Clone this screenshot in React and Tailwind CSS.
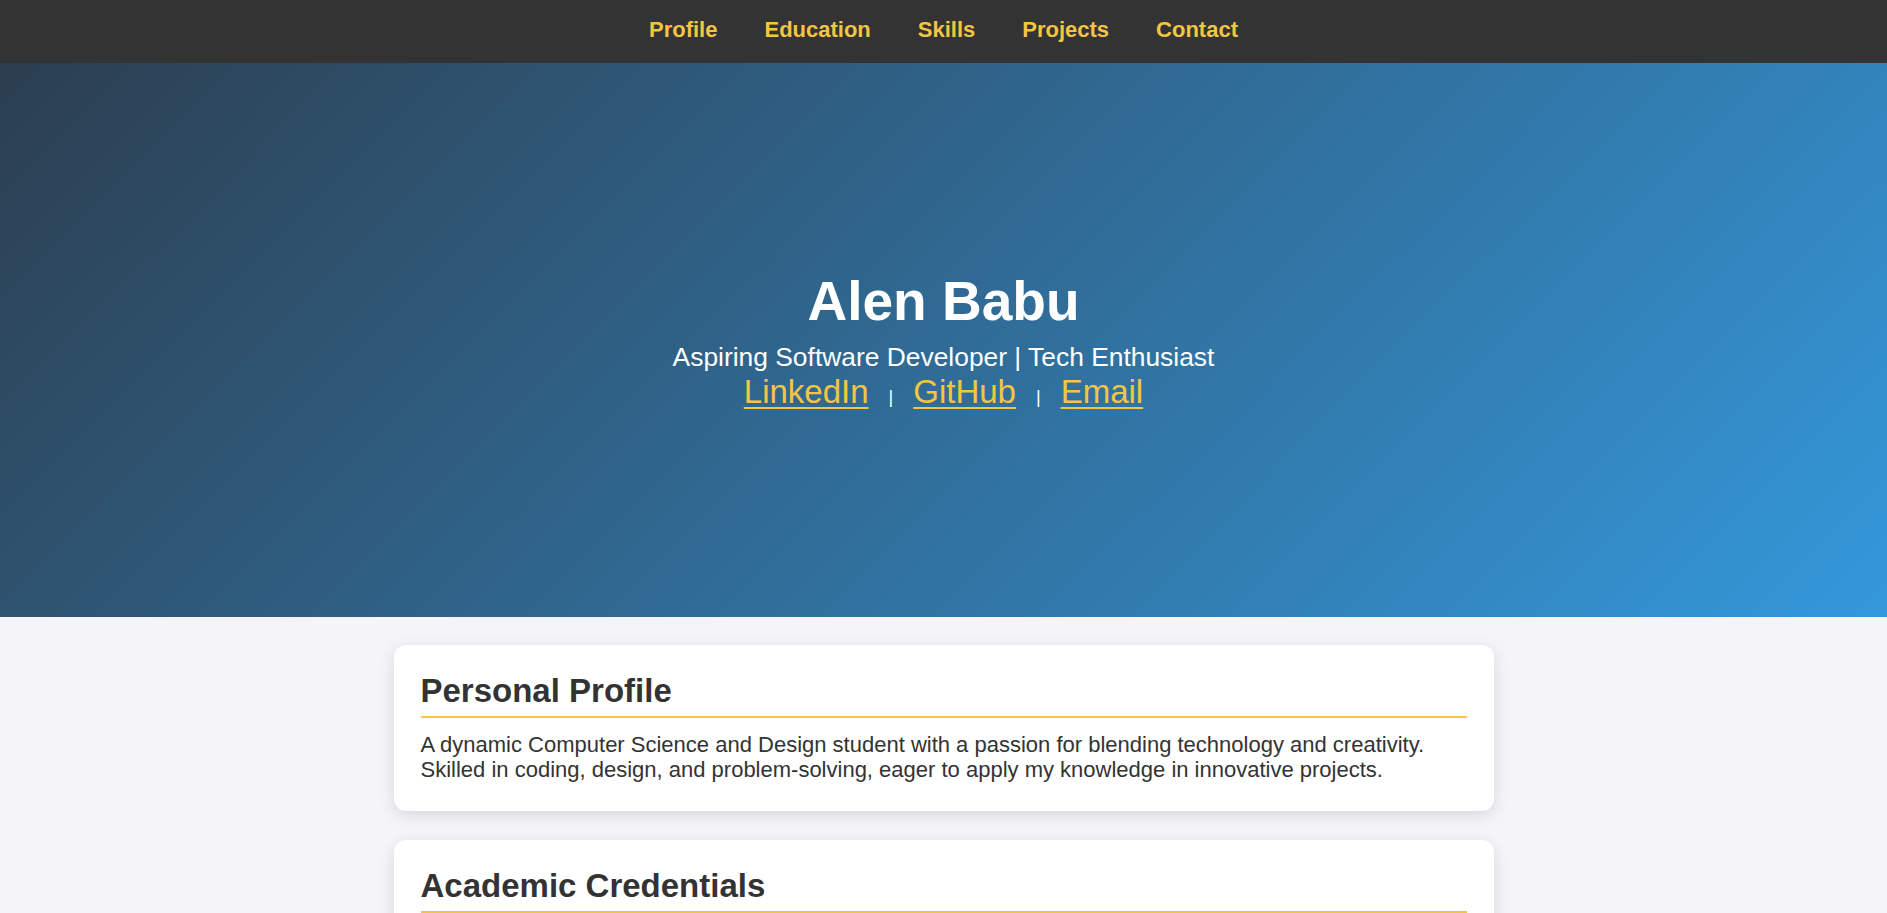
import React from "react";

const Y = "text-[#f4c542]";

function Card({ title, children }) {
  return (
    <section className="bg-white rounded-[12px] shadow-[0_4px_16px_rgba(0,0,0,0.12)] px-[27px] pt-[27px] pb-[28px]">
      <h2 className="text-[33px] font-bold leading-[38px] text-[#333] pb-[6px] border-b-2 border-[#f4c542]">
        {title}
      </h2>
      <div className="mt-[14px] text-[22px] leading-[25.3px] text-[#333]">{children}</div>
    </section>
  );
}

export default function App() {
  return (
    <div
      className="min-h-screen bg-[#f4f4f9] text-[#333]"
      style={{ fontFamily: '"Liberation Sans", Arial, sans-serif' }}
    >
      <nav className="h-[63px] pb-[5px] bg-[#333] flex items-center justify-center gap-[47px]">
        {["Profile", "Education", "Skills", "Projects", "Contact"].map((t) => (
          <a key={t} href="#" className={`${Y} text-[22px] font-bold leading-[25px]`}>
            {t}
          </a>
        ))}
      </nav>

      <header className="h-[554px] pt-[6px] bg-[linear-gradient(135deg,#2c3e50,#3498db)] flex flex-col items-center justify-center text-white">
        <h1 className="text-[55px] font-bold leading-[63px]">Alen Babu</h1>
        <p className="mt-[9px] text-[26.4px] leading-[30px]">
          Aspiring Software Developer | Tech Enthusiast
        </p>
        <div className="flex items-baseline justify-center gap-[20px] leading-[39px]">
          <a href="#" className={`${Y} text-[33px] underline underline-offset-[4px] decoration-2`}>LinkedIn</a>
          <span className="text-[18px] text-white">|</span>
          <a href="#" className={`${Y} text-[33px] underline underline-offset-[4px] decoration-2`}>GitHub</a>
          <span className="text-[18px] text-white">|</span>
          <a href="#" className={`${Y} text-[33px] underline underline-offset-[4px] decoration-2`}>Email</a>
        </div>
      </header>

      <main className="w-[1100px] mx-auto pt-[28px] pb-[40px] flex flex-col gap-[29px]">
        <Card title="Personal Profile">
          <p>
            A dynamic Computer Science and Design student with a passion for blending technology and creativity.
            Skilled in coding, design, and problem-solving, eager to apply my knowledge in innovative projects.
          </p>
        </Card>
        <Card title="Academic Credentials">
          <p>B.Tech in Computer Science and Design</p>
        </Card>
        <Card title="Skills">
          <p>Programming, Web Development, UI/UX Design</p>
        </Card>
        <Card title="Projects">
          <p>Portfolio website and various academic projects.</p>
        </Card>
        <Card title="Contact">
          <p>Reach out via LinkedIn, GitHub or Email.</p>
        </Card>
      </main>
    </div>
  );
}
